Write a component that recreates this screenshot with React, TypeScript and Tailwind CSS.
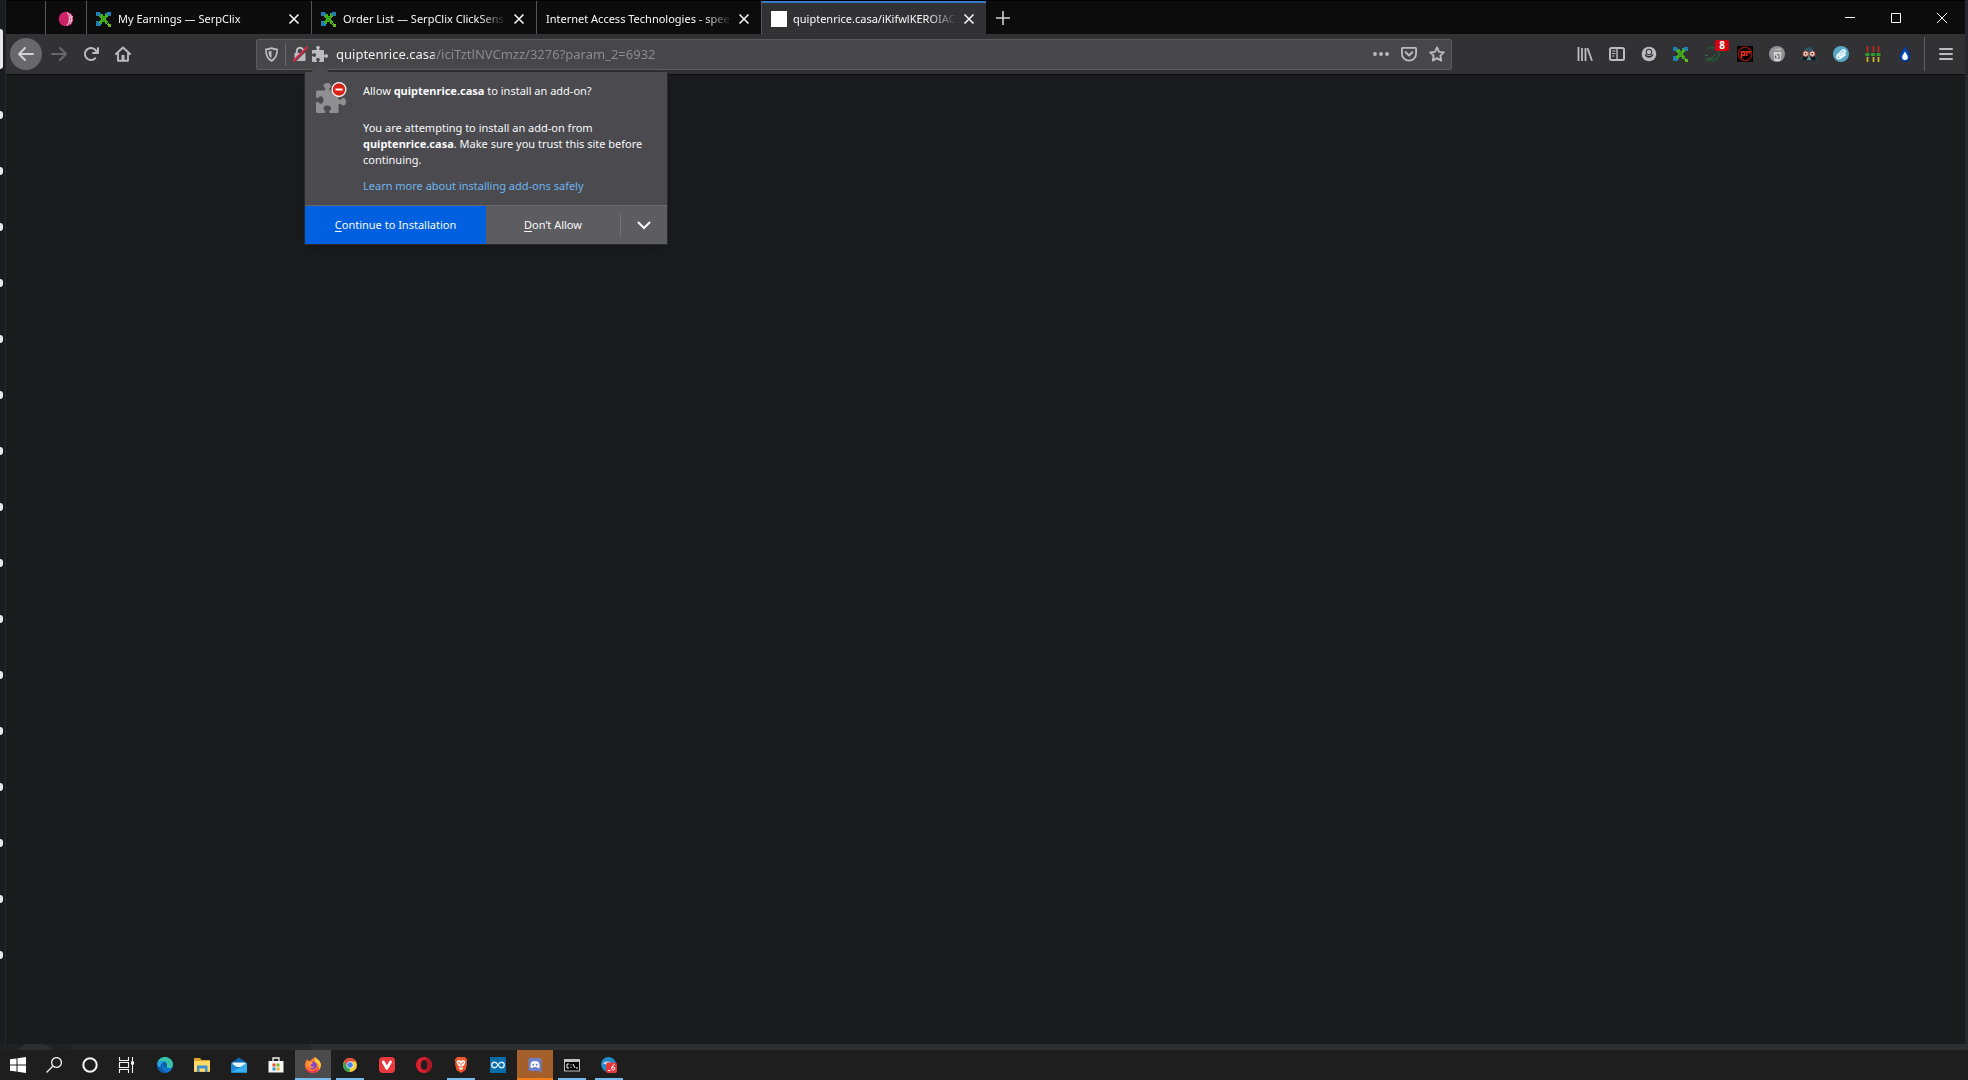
import React from "react";
import type { ReactNode } from "react";

type IconProps = { children: ReactNode; className?: string; box?: string };

function Icon({ children, className = "size-4", box = "0 0 16 16" }: IconProps) {
  return (
    <svg viewBox={box} className={className} fill="none" aria-hidden="true">
      {children}
    </svg>
  );
}

const PUZZLE =
  "M14.5 8c-.971 0-1 1-1.75 1a.765.765 0 0 1-.75-.75V5a1 1 0 0 0-1-1H7.75A.765.765 0 0 1 7 3.25c0-.75 1-.779 1-1.75C8 .635 7.1 0 6 0S4 .635 4 1.5c0 .971 1 1 1 1.75a.765.765 0 0 1-.75.75H1a1 1 0 0 0-1 1v2.25A.765.765 0 0 0 .75 8c.75 0 .779-1 1.75-1C3.365 7 4 7.9 4 9s-.635 2-1.5 2c-.971 0-1-1-1.75-1a.765.765 0 0 0-.75.75V15a1 1 0 0 0 1 1h3.25a.765.765 0 0 0 .75-.75c0-.75-1-.779-1-1.75 0-.865.9-1.5 2-1.5s2 .635 2 1.5c0 .971-1 1-1 1.75a.765.765 0 0 0 .75.75H11a1 1 0 0 0 1-1v-3.25a.765.765 0 0 1 .75-.75c.75 0 .779 1 1.75 1 .865 0 1.5-.9 1.5-2s-.635-2-1.5-2z";

const BACK =
  "M15 7H3.414l4.293-4.293a1 1 0 0 0-1.414-1.414l-6 6a1 1 0 0 0 0 1.414l6 6a1 1 0 0 0 1.414-1.414L3.414 9H15a1 1 0 0 0 0-2z";

const RELOAD =
  "M15 1a1 1 0 0 0-1 1v2.418A6.995 6.995 0 1 0 8 15a6.954 6.954 0 0 0 4.95-2.05 1 1 0 0 0-1.414-1.414A5.019 5.019 0 1 1 12.549 6H10a1 1 0 0 0 0 2h5a1 1 0 0 0 1-1V2a1 1 0 0 0-1-1z";

function SerpClixIcon() {
  return (
    <Icon>
      <path d="M0 1h4v1h1v2H3v1H0zM9 2h2V1h4v4h-3V4H9zM0 10h3v2h2v3H0z" fill="#1f7fb5" />
      <path d="M3 4h2V3h2v2h2V3h2v1h1v2h-1v1h-1v2h1v1h1v2h-1v1H9v-2H6v2H4v-1H3v-2h1V9h1V7H4V6H3z" fill="#46ad1c" />
      <path d="M12 12h1v1h2v3h-3v-2h-1v-1h1z" fill="#63bd1c" />
      <path d="M6 6h3v1H6zM6 9h3v1H6z" fill="#2a8f1a" />
    </Icon>
  );
}

function PinkGlobe() {
  return (
    <Icon>
      <circle cx="8" cy="8" r="7.3" fill="#cc2467" />
      <path d="M9 1.500c3 2 4.500 8 0 13M12 3c2 3 2 7 0 10M10.500 7l4.500-1.500M10 10l4.500-1" stroke="#f3c1d5" strokeWidth="1.100" />
    </Icon>
  );
}

function CloseGlyph() {
  return (
    <Icon className="size-3" box="0 0 12 12">
      <path d="M1.500 1.500l9 9M10.500 1.500l-9 9" stroke="#f4f4f5" strokeWidth="1.600" />
    </Icon>
  );
}

type TabProps = { title: string; icon?: ReactNode; active?: boolean };

function Tab({ title, icon, active }: TabProps) {
  return (
    <div
      role="tab"
      aria-selected={!!active}
      className={
        active
          ? "flex w-[224px] shrink-0 items-center border-t-2 border-[#3a7bc8] bg-[#323234] pr-2 pl-[9px]"
          : "flex w-[225px] shrink-0 items-center border-r border-[#55555a] pt-0.5 pr-2 pl-[9px]"
      }
    >
      {icon ? <span className="mr-1.5 shrink-0">{icon}</span> : null}
      <span className="min-w-0 flex-1 overflow-hidden text-[11px] leading-5 whitespace-nowrap text-[#f9f9fa] [mask-image:linear-gradient(to_right,black_calc(100%-28px),transparent)]">
        {title}
      </span>
      <button aria-label={`Close ${title}`} className="ml-[3px] flex size-[18px] shrink-0 items-center justify-center">
        <CloseGlyph />
      </button>
    </div>
  );
}

function ToolButton({ label, children }: { label: string; children: ReactNode }) {
  return (
    <button aria-label={label} className="flex size-8 shrink-0 items-center justify-center text-[#bcbcbe]">
      {children}
    </button>
  );
}

function TabBar() {
  return (
    <header className="flex h-[34px] shrink-0 border-t border-black bg-[#0c0c0d]">
      <div role="tablist" className="flex min-w-0">
        <div className="w-10 shrink-0 border-r border-[#55555a]" />
        <div role="tab" aria-label="Pinned tab" className="flex w-[41px] shrink-0 items-center justify-center border-r border-[#55555a] pt-0.5">
          <PinkGlobe />
        </div>
        <Tab title="My Earnings — SerpClix" icon={<SerpClixIcon />} />
        <Tab title="Order List — SerpClix ClickSens" icon={<SerpClixIcon />} />
        <Tab title="Internet Access Technologies - spee" />
        <Tab title="quiptenrice.casa/iKifwlKEROIAC" icon={<span className="block size-4 bg-white" />} active />
      </div>
      <button aria-label="New tab" className="flex w-[34px] shrink-0 items-center justify-center text-[#d0d0d2]">
        <Icon>
          <path d="M8 1v14M1 8h14" stroke="currentColor" strokeWidth="1.600" />
        </Icon>
      </button>
      <div className="ml-auto flex shrink-0 text-white">
        <button aria-label="Minimize" className="flex w-[46px] items-center justify-center">
          <Icon className="size-2.5" box="0 0 10 10">
            <path d="M0 4.500h10" stroke="currentColor" />
          </Icon>
        </button>
        <button aria-label="Maximize" className="flex w-[46px] items-center justify-center">
          <Icon className="size-2.5" box="0 0 10 10">
            <path d="M.5.5h9v9h-9z" stroke="currentColor" />
          </Icon>
        </button>
        <button aria-label="Close window" className="flex w-[46px] items-center justify-center">
          <Icon className="size-2.5" box="0 0 10 10">
            <path d="M0 0l10 10M10 0L0 10" stroke="currentColor" />
          </Icon>
        </button>
      </div>
    </header>
  );
}

function InstallPopup() {
  return (
    <section
      role="dialog"
      aria-label="Install add-on"
      className="absolute top-[31px] left-[47px] z-10 w-[364px] border border-[#2a2a2d] bg-[#4a4a4f] text-[11px] leading-4 text-[#f9f9fa] shadow-lg"
    >
      <svg viewBox="0 0 20 10" className="absolute -top-[9px] left-[5px] h-2.5 w-5" aria-hidden="true">
        <path d="M0 10L10 0l10 10z" fill="#4a4a4f" />
      </svg>
      <div className="flex pt-2.5 pb-[11px] pl-[11px]">
        <Icon className="h-8 w-8 shrink-0" box="0 0 32 32">
          <g transform="translate(0 1) scale(1.880)">
            <path d={PUZZLE} fill="#8f8f92" />
          </g>
          <circle cx="23" cy="7.500" r="7.500" fill="#fff" />
          <circle cx="23" cy="7.500" r="6.200" fill="#d92215" />
          <path d="M19.500 7.500h7" stroke="#fff" strokeWidth="2" />
        </Icon>
        <div className="ml-[15px] pt-px">
          <p>
            Allow <b>quiptenrice.casa</b> to install an add-on?
          </p>
          <p className="mt-[21px]">
            You are attempting to install an add-on from
            <br />
            <b>quiptenrice.casa</b>. Make sure you trust this site before
            <br />
            continuing.
          </p>
          <a href="#learn-more" className="mt-2.5 block text-[#6fb4ee]">
            Learn more about installing add-ons safely
          </a>
        </div>
      </div>
      <div className="flex h-[39px] border-t border-[#68686d] bg-[#5c5c61]">
        <button className="w-[181px] bg-[#0060df]">
          <span className="underline underline-offset-2">C</span>ontinue to Installation
        </button>
        <button className="flex-1">
          <span className="underline underline-offset-2">D</span>on’t Allow
        </button>
        <span className="my-[7px] w-px bg-[#737378]" />
        <button aria-label="More options" className="flex w-[46px] items-center justify-center">
          <Icon className="size-3.5" box="0 0 14 14">
            <path d="M1.500 4.500L7 10l5.500-5.500" stroke="#f9f9fa" strokeWidth="2" strokeLinecap="round" />
          </Icon>
        </button>
      </div>
    </section>
  );
}

function AddressBar() {
  return (
    <div className="relative flex h-[31px] w-[1196px] min-w-0 shrink items-center rounded-[2px] border border-[#5b5b5d] bg-[#474749] text-[#bcbcbe]">
      <button aria-label="Tracking protection" className="ml-[5px] flex w-[18px] justify-center">
        <Icon className="size-[15px]">
          <path d="M8 1.200c2 .9 4 1.200 6 1.200 0 6.500-1.600 10.200-6 12.400C3.600 12.600 2 8.900 2 2.400c2 0 4-.3 6-1.200z" stroke="currentColor" strokeWidth="1.800" strokeLinejoin="round" />
          <path d="M8 4v8C5.800 10.500 5 8.600 4.700 4.800 6 4.700 7 4.500 8 4z" fill="currentColor" />
        </Icon>
      </button>
      <span className="ml-[5px] h-[23px] w-px bg-[#68686a]" />
      <button aria-label="Connection not secure" className="ml-1.5">
        <Icon>
          <path d="M2.500 7h11v8h-11z" fill="currentColor" />
          <path d="M4.800 8V5a3.200 3.200 0 0 1 6.400 0v3" stroke="currentColor" strokeWidth="2" />
          <path d="M2 16L16 2" stroke="#474749" strokeWidth="2" />
          <path d="M1 15.500L15.500 1" stroke="#d7264a" strokeWidth="2.200" />
        </Icon>
      </button>
      <button aria-label="Add-on installation request" className="ml-1">
        <Icon>
          <path d={PUZZLE} fill="currentColor" />
        </Icon>
      </button>
      <input
        aria-label="Address"
        type="text"
        defaultValue="quiptenrice.casa/iciTztlNVCmzz/3276?param_2=6932"
        className="ml-2 h-7 min-w-0 flex-1 bg-[linear-gradient(to_right,#f9f9fa_98px,#8d8d90_98px)] bg-clip-text text-[13px] text-transparent outline-none"
      />
      <div className="mr-1.5 flex gap-3">
        <button aria-label="Page actions">
          <Icon>
            <circle cx="2" cy="8" r="1.900" fill="currentColor" />
            <circle cx="8" cy="8" r="1.900" fill="currentColor" />
            <circle cx="14" cy="8" r="1.900" fill="currentColor" />
          </Icon>
        </button>
        <button aria-label="Save to Pocket">
          <Icon>
            <path d="M1.500 1.900h13a.6.6 0 0 1 .6.600V7.500a7.100 7.100 0 0 1-14.200 0V2.500a.6.6 0 0 1 .6-.6z" stroke="currentColor" strokeWidth="1.800" />
            <path d="M4.700 6.300L8 9.500l3.300-3.200" stroke="currentColor" strokeWidth="2" strokeLinecap="round" strokeLinejoin="round" />
          </Icon>
        </button>
        <button aria-label="Bookmark this page">
          <Icon>
            <path d="M8 1.400l2 4.500 4.900.5-3.600 3.300 1 4.900L8 12.100l-4.300 2.500 1-4.900L1.100 6.400 6 5.900z" stroke="currentColor" strokeWidth="1.800" strokeLinejoin="round" />
          </Icon>
        </button>
      </div>
      <InstallPopup />
    </div>
  );
}

function Toolbar() {
  return (
    <nav className="flex h-[41px] shrink-0 items-center border-b border-[#0c0c0d] bg-[#323234]">
      <button aria-label="Back" className="ml-1 flex size-8 shrink-0 items-center justify-center rounded-full bg-[#68686a] text-[#d2d2d4]">
        <Icon>
          <path d={BACK} fill="currentColor" />
        </Icon>
      </button>
      <button aria-label="Forward" className="ml-[9px] shrink-0 text-[#68686a]">
        <Icon>
          <path d={BACK} fill="currentColor" transform="matrix(-1 0 0 1 16 0)" />
        </Icon>
      </button>
      <div className="ml-2 flex shrink-0">
        <ToolButton label="Reload">
          <Icon>
            <path d={RELOAD} fill="currentColor" />
          </Icon>
        </ToolButton>
        <ToolButton label="Home">
          <Icon>
            <path d="M1 8l7-6.500L15 8M3 7.500v7.300h10V7.500" stroke="currentColor" strokeWidth="1.900" strokeLinecap="round" strokeLinejoin="round" />
            <path d="M6.500 9h3v5.500h-3z" fill="currentColor" />
          </Icon>
        </ToolButton>
      </div>
      <div className="min-w-4 flex-[117]" />
      <AddressBar />
      <div className="min-w-4 flex-[117]" />
      <div className="flex shrink-0">
        <ToolButton label="Library">
          <Icon>
            <path d="M1.500 1v14M5 2v13M8.500 2v13M10.500 2.300L15 14.700" stroke="currentColor" strokeWidth="1.800" />
          </Icon>
        </ToolButton>
        <ToolButton label="Sidebars">
          <Icon>
            <rect x="1" y="2" width="14" height="12" rx="1.500" stroke="currentColor" strokeWidth="2" />
            <path d="M8 2v12" stroke="currentColor" strokeWidth="1.400" />
            <path d="M3 5h3.500M3 7.500h3.500M3 10h2.500" stroke="currentColor" />
          </Icon>
        </ToolButton>
        <ToolButton label="Account">
          <Icon>
            <circle cx="8" cy="8" r="7.300" fill="currentColor" />
            <path d="M3.600 8.300C4 12.800 12 12.800 12.400 8.300l-1.700.2C10 10.500 6 10.500 5.300 8.500z" fill="#323234" />
            <circle cx="8" cy="6" r="3.200" fill="#323234" />
            <circle cx="8" cy="6" r="2.200" fill="currentColor" />
          </Icon>
        </ToolButton>
        <ToolButton label="SerpClix">
          <SerpClixIcon />
        </ToolButton>
        <div className="relative">
          <ToolButton label="Notifications, 8 new">
            <Icon>
              <path d="M3 2.500C8-.5 14.500 3 14 8.500S6 16.500 1 13" stroke="#245138" strokeWidth="2.200" />
              <path d="M0 9.500h3M2 12c4 1.500 7 0 8-4" stroke="#2f6f48" />
            </Icon>
          </ToolButton>
          <span className="absolute top-[2px] left-[18px] flex h-[11px] w-3.5 items-center justify-center rounded-[2px] bg-[#d70010] text-[10px] font-bold text-white">
            8
          </span>
        </div>
        <ToolButton label="Pr">
          <Icon>
            <path d="M0 0h16v16H0z" fill="#050000" />
            <circle cx="8" cy="8" r="6.800" stroke="#8d1810" strokeWidth="1.300" />
            <path d="M4.500 12V5.700h3v3.500h-3M9.700 10V5.700h3v2" stroke="#ea2c1c" strokeWidth="1.600" />
          </Icon>
        </ToolButton>
        <ToolButton label="Cookie remover">
          <Icon>
            <circle cx="8" cy="8" r="8" fill="#929294" />
            <path d="M4.500 6h8l-1 9h-6z" fill="#d0d0d0" />
            <path d="M4 4.500l7-2.500 1.500 2.300z" fill="#bdbdbd" />
            <circle cx="8.500" cy="10.500" r="2" stroke="#555" strokeWidth="1.200" strokeDasharray="2.500 1.500" />
          </Icon>
        </ToolButton>
        <ToolButton label="Privacy mask">
          <Icon>
            <path d="M3 6C3-.5 13-.5 13 6l3 7-1.500 2h-13L0 13z" fill="#2d5563" />
            <path d="M2 10h12l1 4.500H1z" fill="#12191d" />
            <path d="M8 9l2.500 5h-5z" fill="#6d8b96" />
            <circle cx="4.700" cy="7.800" r="2.600" fill="#f6e6e0" stroke="#c05a44" />
            <circle cx="11.300" cy="7.800" r="2.600" fill="#f6e6e0" stroke="#c05a44" />
            <circle cx="4.700" cy="7.800" r="1" fill="#7a2c20" />
            <circle cx="11.300" cy="7.800" r="1" fill="#7a2c20" />
          </Icon>
        </ToolButton>
        <ToolButton label="Clip manager">
          <Icon>
            <circle cx="8" cy="8" r="8" fill="#58a8c6" />
            <path d="M10.500 6L6.500 9.300M4.500 9L9 4.500c2-1.700 4.500.6 2.700 2.600L8 10.500c-1.300 1-2.700-.4-1.600-1.600M4.500 9c-1.800 2.500 1 4.700 3.200 3.200l4.500-3.400" stroke="#e9f7fc" strokeWidth="1.500" strokeLinecap="round" />
          </Icon>
        </ToolButton>
        <ToolButton label="Traffic bars">
          <Icon>
            <path d="M2.500 0v6M8.500 0v6M13.500 0v6" stroke="#b92822" strokeWidth="1.800" />
            <path d="M.5 8.500h4M6 8.500h4M11.500 8.500h4" stroke="#2e9c27" strokeWidth="3" />
            <path d="M2.500 11v5M8.500 11v5M13.500 11v5" stroke="#c9b52d" strokeWidth="1.800" />
          </Icon>
        </ToolButton>
        <ToolButton label="Droplet">
          <Icon>
            <path d="M8 1c2 3.700 5 6.200 5 9.500a5 5 0 0 1-10 0C3 7.200 6 4.700 8 1z" fill="#0749bd" stroke="#062f87" />
            <path d="M8 5.500c1 2.200 2.800 3.700 2.800 5.700a2.800 2.800 0 0 1-5.600 0c0-2 1.800-3.500 2.800-5.700z" fill="#fff" />
          </Icon>
        </ToolButton>
      </div>
      <span className="ml-[3px] h-[34px] w-px shrink-0 bg-[#5f5f61]" />
      <div className="mr-[3px] ml-[5px] flex">
        <ToolButton label="Open menu">
          <Icon className="h-4 w-3.5" box="0 0 14 16">
            <path d="M1 3h12M1 8h12M1 13h12" stroke="currentColor" strokeWidth="2" strokeLinecap="round" />
          </Icon>
        </ToolButton>
      </div>
    </nav>
  );
}

const railDots = Array.from({ length: 16 }, (_, i) => i);

type Task = { name: string; icon: ReactNode; state?: "open" | "active" | "alert" };

const systemTasks: Task[] = [
  {
    name: "Start",
    icon: (
      <path d="M0 2.300L6.500 1.400v6.100H0zM7.500 1.200L16 0v7.500H7.500zM0 8.500h6.500v6.100L0 13.700zM7.500 8.500H16V16l-8.500-1.200z" fill="#fff" />
    ),
  },
  {
    name: "Search",
    icon: (
      <g stroke="#f2f2f2" strokeWidth="1.300">
        <circle cx="10.500" cy="5.500" r="4.900" />
        <path d="M7 9L.5 15.500" />
      </g>
    ),
  },
  { name: "Cortana", icon: <circle cx="8" cy="8" r="6.700" stroke="#f2f2f2" strokeWidth="2" /> },
  {
    name: "Task View",
    icon: (
      <g stroke="#f2f2f2" strokeWidth="1.100">
        <path d="M1.500 0v3.500h9V0M1.500 16v-3.500h9V16M1.500 5.500h9v5h-9zM14.500 0v16" />
        <path d="M13 4.500h3v3h-3z" fill="#f2f2f2" stroke="none" />
      </g>
    ),
  },
];

const appTasks: Task[] = [
  {
    name: "Edge",
    icon: (
      <>
        <circle cx="8" cy="8" r="8" fill="#1475c9" />
        <path d="M.3 6.500C1.500 1.500 6-1 10.500.5c4.500 1.500 6.500 6 5 9-1.200 2-4.500 2-6 .6 1.500-3-1-5.100-3.500-5.100C3.500 5 1.500 6 .3 6.500z" fill="#37c5a7" />
        <path d="M.1 7.500C2 2.500 9 3.200 9.800 7c.5 2-1.300 2.600-.3 3.500-2 .5-3.600-1.500-3-4C3.600 8.300 4.500 14 9.500 15.500 4.500 17 0 12.800.1 7.500z" fill="#0c5ba8" />
        <path d="M.3 6.500C3 3.500 6.500 3.500 8.600 5c-3-.5-5.600 2-5.200 6C2 9.500.2 9 .3 6.500z" fill="#27a7e0" />
      </>
    ),
  },
  {
    name: "File Explorer",
    icon: (
      <>
        <path d="M0 1h6l1.500 2H16v12H0z" fill="#e5a526" />
        <path d="M0 4h16v10.500H0z" fill="#ffd968" />
        <path d="M3 8.500h10.500V15H11v-3.500H5.500V15H3z" fill="#3f91d2" />
      </>
    ),
  },
  {
    name: "Mail",
    icon: (
      <>
        <path d="M0 6l8-5.500L16 6v9.500H0z" fill="#0b67b5" />
        <path d="M1.500 5.500h13V10h-13z" fill="#e9f4fb" />
        <path d="M0 6l8 5.500L16 6v9.500H0z" fill="#1789d8" />
        <path d="M0 15.500L16 6v9.500z" fill="#36aff0" />
      </>
    ),
  },
  {
    name: "Microsoft Store",
    icon: (
      <>
        <path d="M5 4V1h6v3" stroke="#f5f5f5" strokeWidth="1.300" />
        <path d="M.5 4h15v11.500h-15z" fill="#f5f5f5" />
        <path d="M4.500 6.500h3v3h-3z" fill="#e64a25" />
        <path d="M8.500 6.500h3v3h-3z" fill="#79b82a" />
        <path d="M4.500 10.500h3v3h-3z" fill="#259bdc" />
        <path d="M8.500 10.500h3v3h-3z" fill="#f1b51c" />
      </>
    ),
  },
  {
    name: "Firefox",
    state: "active",
    icon: (
      <>
        <path d="M10 0c1 1.500 4.500 3.200 5.500 6 1.500 5-2 10-7.300 10C3.500 16 0 12.500 0 8.300 0 5.500 1 3.500 2.500 2L3 4l3-.5C7 1.500 8.500 1.500 10 0z" fill="#ff7d2b" />
        <path d="M10 0c1 1.500 4.500 3.200 5.500 6 .7 2.500-.3 5-1.500 6.500.5-4-1-6-3.500-7C10 3.500 9.500 2 10 0z" fill="#ffd43b" />
        <path d="M.3 9c1 4 5.200 5.800 9 4.500 2-.7 3.700-2 4.500-4-.3 4-2.700 6.500-6 6.500C3.500 16 .5 13 .3 9z" fill="#ef3457" />
        <circle cx="8" cy="8.500" r="3.700" fill="#8145d5" />
        <path d="M2.500 5C5 4 7 5 8 6.500l-2.500 1C5.500 9.500 8 10 9.500 9.300 8 12.500 2.500 11 2.500 5z" fill="#ff9b32" />
      </>
    ),
  },
  {
    name: "Chrome",
    state: "open",
    icon: (
      <>
        <circle cx="8" cy="8" r="7" fill="#f8cd3f" />
        <path d="M1.940 4.500A7 7 0 0 1 14.060 4.500H8L5 9.700z" fill="#df4a3e" />
        <path d="M1.940 4.500L5 9.700 8 11.500 7.500 15A7 7 0 0 1 1.940 4.500z" fill="#30a653" />
        <circle cx="8" cy="8" r="3.500" fill="#f5f5f5" />
        <circle cx="8" cy="8" r="2.800" fill="#4385ec" />
      </>
    ),
  },
  {
    name: "Vivaldi",
    icon: (
      <>
        <rect width="16" height="16" rx="4" fill="#e93840" />
        <path d="M4.300 5l3.500 6.300L11.500 5" stroke="#fff" strokeWidth="2.800" strokeLinecap="round" strokeLinejoin="round" />
      </>
    ),
  },
  {
    name: "Opera",
    icon: (
      <>
        <circle cx="8" cy="8" r="8" fill="#df1f2d" />
        <path d="M11 .7c6.500 3 6.500 11.700 0 14.600-3-1-3-13.600 0-14.600z" fill="#ad1824" />
        <ellipse cx="8" cy="8" rx="3.200" ry="5" fill="#1e1e1e" />
      </>
    ),
  },
  {
    name: "Brave",
    state: "open",
    icon: (
      <>
        <path d="M4 0h8l1 1.500 1.500 1L13.500 5l.5 2-1.500 6L8 16l-4.500-3L2 7l.5-2-1-2.500L3 1.500z" fill="#ee572c" />
        <path d="M5 3l3 .7L11 3l1.500 2-1.500 3-1.500 2 .5 1.500-2 1.500-2-1.500.5-1.500L5 8 3.500 5z" fill="#fff" />
        <path d="M5 5.500l2 .7M11 5.500l-2 .7M8 6v3M6.500 9.500L8 10.500l1.500-1" stroke="#ee572c" />
      </>
    ),
  },
  {
    name: "Infinity",
    icon: (
      <>
        <path d="M0 0h16v16H0z" fill="#096da9" />
        <path d="M8 8C6.500 5.500 5.500 5.300 4.500 5.300a2.700 2.700 0 0 0 0 5.400C5.500 10.700 6.500 10.500 8 8s2.500-2.700 3.500-2.700a2.700 2.700 0 0 1 0 5.400C10.500 10.700 9.500 10.500 8 8z" stroke="#d7ecf8" strokeWidth="1.400" />
      </>
    ),
  },
  {
    name: "Discord",
    state: "alert",
    icon: (
      <>
        <path d="M3 1h10a1.500 1.500 0 0 1 1.500 1.500V16L12 14H3a1.500 1.500 0 0 1-1.500-1.500v-10A1.500 1.500 0 0 1 3 1z" fill="#6d7fc9" />
        <path d="M4.500 5c2-1.200 5-1.200 7 0 .8 1.500 1.200 3.500 1 5.200-.8.700-1.600.8-2.200.8l-.6-1H6.300l-.6 1c-.6 0-1.400-.1-2.200-.8-.2-1.700.2-3.700 1-5.200z" fill="#fff" />
        <circle cx="6.300" cy="7.800" r="1" fill="#6d7fc9" />
        <circle cx="9.700" cy="7.800" r="1" fill="#6d7fc9" />
      </>
    ),
  },
  {
    name: "Command Prompt",
    state: "open",
    icon: (
      <>
        <path d="M0 2h16v12.500H0z" fill="#bfc2c5" />
        <path d="M1 5h14v8.500H1z" fill="#000" />
        <path d="M5 7H3v4h2M7 7.500v1M7 10v1M9 7l2 4M12 11h2" stroke="#fff" />
      </>
    ),
  },
  {
    name: "Mail client",
    state: "open",
    icon: (
      <>
        <circle cx="7.500" cy="7.500" r="7.500" fill="#238bc5" />
        <path d="M2 6.500C4 4 8 4 10 5.500L6 8z" fill="#c4dfed" />
        <rect x="5" y="5.500" width="11" height="10.500" rx="2" fill="#e7393d" />
        <path d="M7 13.500h2.500M13.500 7.500c-3 1-3.500 5.500-1.300 5.500 2.300 0 2-3 0-3-.9 0-1.500.7-1.700 1.500" stroke="#fff" />
      </>
    ),
  },
];

function TaskButton({ task }: { task: Task }) {
  const tone =
    task.state === "active" ? "bg-[#4b4b4c]" : task.state === "alert" ? "bg-[#a45f2a]" : "";
  return (
    <button aria-label={task.name} className={`relative flex w-9 shrink-0 items-center justify-center ${tone}`}>
      <Icon>{task.icon}</Icon>
      {task.state === "open" && <span className="absolute inset-x-1 bottom-0 h-0.5 bg-[#76b9ed]" />}
      {task.state === "active" && <span className="absolute inset-x-0 bottom-0 h-0.5 bg-[#76b9ed]" />}
      {task.state === "alert" && <span className="absolute inset-x-0 bottom-0 h-0.5 bg-[#f57c12]" />}
    </button>
  );
}

export default function App() {
  return (
    <div className="flex h-screen flex-col overflow-hidden bg-[#1b1c1f] [font-family:'Noto_Sans','Open_Sans',sans-serif]">
      <div className="flex min-h-0 flex-1">
        <aside className="flex w-1.5 shrink-0 flex-col overflow-hidden border-r border-[#28292c] bg-[#1b1c1f] pt-[29px]">
          <span className="h-10 w-[3px] shrink-0 rounded-r bg-[#e8e8ea]" />
          <div className="mt-[42px] flex flex-col gap-12">
            {railDots.map((dot) => (
              <span key={dot} className="h-2 w-[3px] shrink-0 rounded-r-full bg-[#e8e8ea]" />
            ))}
          </div>
        </aside>
        <div className="flex min-w-0 flex-1 flex-col">
          <TabBar />
          <Toolbar />
          <main className="flex-1 bg-[#1a1b1d]" />
        </div>
        <div className="w-[3px] shrink-0 bg-[#27282d]" />
      </div>
      <div className="flex h-1.5 shrink-0 bg-[#202125]">
        <svg viewBox="0 0 36 6" className="ml-[17px] h-1.5 w-9" aria-hidden="true">
          <path d="M0 6C5 2 8 0 10 0h16c3 0 6 2 10 6z" fill="#2c2d31" />
        </svg>
        <span className="ml-[18px] w-60 bg-[#26272b]" />
        <span className="flex-1 bg-[#2d2f33]" />
      </div>
      <footer className="flex h-[30px] shrink-0 bg-[#1e1e1e]">
        {systemTasks.map((task) => (
          <TaskButton key={task.name} task={task} />
        ))}
        <div className="ml-[3px] flex gap-px">
          {appTasks.map((task) => (
            <TaskButton key={task.name} task={task} />
          ))}
        </div>
      </footer>
    </div>
  );
}
